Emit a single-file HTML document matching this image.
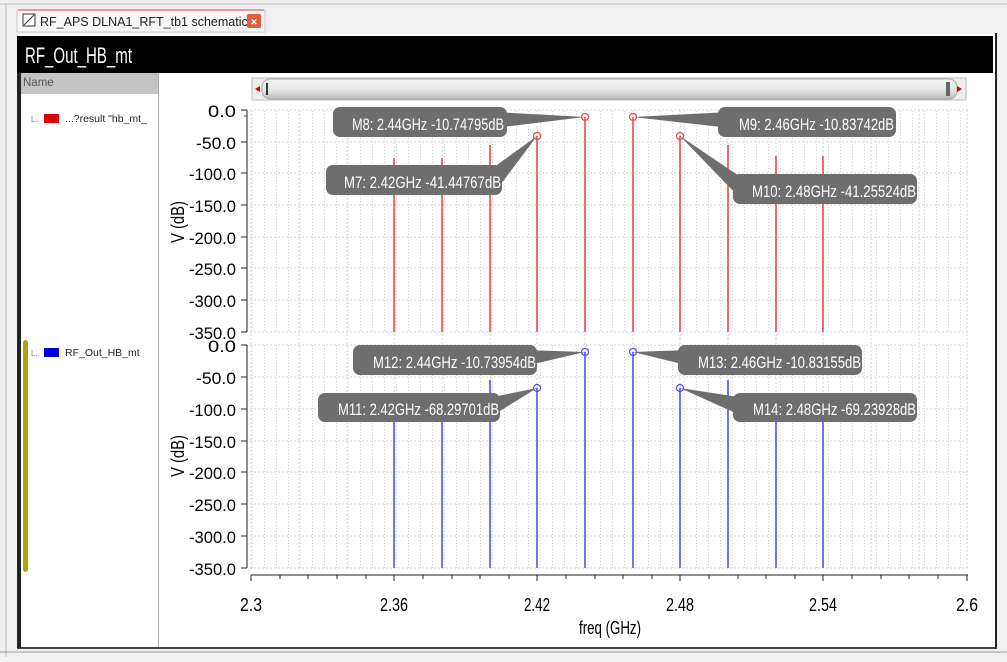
<!DOCTYPE html>
<html><head><meta charset="utf-8"><style>
html,body{margin:0;padding:0;background:#f3f3f3;}
body{width:1007px;height:657px;overflow:hidden;position:relative;font-family:"Liberation Sans",sans-serif;}
</style></head><body>
<svg width="1007" height="657" viewBox="0 0 1007 657" xmlns="http://www.w3.org/2000/svg" font-family="Liberation Sans, sans-serif">
<defs>
<linearGradient id="sb" x1="0" y1="0" x2="0" y2="1"><stop offset="0" stop-color="#f6f6f6"/><stop offset="0.5" stop-color="#e8e8e8"/><stop offset="1" stop-color="#bdbdbd"/></linearGradient>
<pattern id="vg" width="12" height="3" patternUnits="userSpaceOnUse"><rect width="1" height="1" fill="#d0d0d0"/></pattern>
</defs>
<rect x="0" y="0" width="1007" height="657" fill="#f1f1f1"/>
<line x1="0" y1="4" x2="1007" y2="4" stroke="#bbb"/>
<line x1="6" y1="4" x2="6" y2="657" stroke="#bbb"/>
<!-- tab -->
<rect x="17" y="10" width="248" height="22" fill="#f7f7f7" stroke="#c8c8c8"/>
<line x1="18" y1="10" x2="264" y2="10" stroke="#e08080" stroke-width="1.5"/>
<rect x="23" y="14" width="12" height="12" fill="#fff" stroke="#333"/>
<line x1="24" y1="25" x2="34" y2="15" stroke="#333"/>
<text x="40" y="26" font-size="12.5" fill="#222">RF_APS DLNA1_RFT_tb1 schematic</text>
<rect x="247" y="14" width="14" height="14" rx="2" fill="#e0603c"/>
<text x="254" y="25.5" font-size="11" fill="#fff" text-anchor="middle" font-weight="bold">×</text>
<!-- frame -->
<rect x="17" y="34" width="980" height="614" fill="#fff"/>
<line x1="996" y1="33" x2="996" y2="649" stroke="#222" stroke-width="2"/>
<line x1="17" y1="648" x2="997" y2="648" stroke="#444" stroke-width="2"/>
<line x1="0" y1="652" x2="1007" y2="652" stroke="#999"/>
<rect x="17" y="36" width="976" height="37" fill="#000"/>
<text x="25" y="63" font-size="22" fill="#fff" textLength="107" lengthAdjust="spacingAndGlyphs">RF_Out_HB_mt</text>
<!-- left panel -->
<rect x="17" y="73" width="4" height="575" fill="#222"/>
<rect x="21" y="73" width="137" height="21" fill="#c4c4c4"/>
<text x="23" y="86" font-size="11.5" fill="#555">Name</text>
<line x1="158.5" y1="73" x2="158.5" y2="647" stroke="#aaa"/>
<rect x="23" y="340" width="5" height="232" rx="2.5" fill="#a8a800"/>
<text x="31" y="122" font-size="8" fill="#888">L..</text>
<rect x="44" y="114" width="15" height="9" fill="#e00000"/>
<text x="65" y="122" font-size="10.5" fill="#222">...?result "hb_mt_</text>
<text x="31" y="356" font-size="8" fill="#888">L..</text>
<rect x="44" y="348" width="15" height="9" fill="#0000dd"/>
<text x="65" y="356" font-size="10.5" fill="#222">RF_Out_HB_mt</text>
<!-- scrollbar -->
<rect x="252" y="78" width="714" height="22" fill="#eee" stroke="#bbb"/>
<rect x="262" y="79" width="695" height="20" rx="8" fill="url(#sb)" stroke="#aaa"/>
<polygon points="255,89 260,86 260,92" fill="#d00"/>
<rect x="266" y="83" width="2" height="12" fill="#333"/>
<rect x="946" y="82" width="4" height="14" fill="#666"/>
<polygon points="962,89 957,86 957,92" fill="#d00"/>
<!-- grids -->
<g id="grids">
<rect x="250" y="110" width="718" height="222" fill="url(#vg)"/>
<rect x="250" y="345" width="718" height="223" fill="url(#vg)"/>
</g>
<g stroke="#d6d6d6" stroke-dasharray="2,2">
<line x1="250" y1="110" x2="968" y2="110"/><line x1="250" y1="142" x2="968" y2="142"/><line x1="250" y1="173" x2="968" y2="173"/><line x1="250" y1="205" x2="968" y2="205"/><line x1="250" y1="237" x2="968" y2="237"/><line x1="250" y1="268" x2="968" y2="268"/><line x1="250" y1="300" x2="968" y2="300"/><line x1="250" y1="332" x2="968" y2="332"/>
<line x1="250" y1="345" x2="968" y2="345"/><line x1="250" y1="377" x2="968" y2="377"/><line x1="250" y1="409" x2="968" y2="409"/><line x1="250" y1="441" x2="968" y2="441"/><line x1="250" y1="472" x2="968" y2="472"/><line x1="250" y1="504" x2="968" y2="504"/><line x1="250" y1="536" x2="968" y2="536"/><line x1="250" y1="568" x2="968" y2="568"/>
<line x1="251" y1="110" x2="251" y2="568"/><line x1="299" y1="110" x2="299" y2="568"/><line x1="347" y1="110" x2="347" y2="568"/><line x1="394" y1="110" x2="394" y2="568"/><line x1="442" y1="110" x2="442" y2="568"/><line x1="490" y1="110" x2="490" y2="568"/><line x1="537" y1="110" x2="537" y2="568"/><line x1="585" y1="110" x2="585" y2="568"/><line x1="633" y1="110" x2="633" y2="568"/><line x1="680" y1="110" x2="680" y2="568"/><line x1="728" y1="110" x2="728" y2="568"/><line x1="776" y1="110" x2="776" y2="568"/><line x1="823" y1="110" x2="823" y2="568"/><line x1="871" y1="110" x2="871" y2="568"/><line x1="919" y1="110" x2="919" y2="568"/><line x1="967" y1="110" x2="967" y2="568"/>
</g>
<!-- y axes -->
<g stroke="#222">
<line x1="247" y1="110" x2="247" y2="332"/><line x1="247" y1="345" x2="247" y2="568"/>
<line x1="241" y1="110" x2="247" y2="110"/><line x1="241" y1="142" x2="247" y2="142"/><line x1="241" y1="173" x2="247" y2="173"/><line x1="241" y1="205" x2="247" y2="205"/><line x1="241" y1="237" x2="247" y2="237"/><line x1="241" y1="268" x2="247" y2="268"/><line x1="241" y1="300" x2="247" y2="300"/><line x1="241" y1="332" x2="247" y2="332"/>
<line x1="241" y1="345" x2="247" y2="345"/><line x1="241" y1="377" x2="247" y2="377"/><line x1="241" y1="409" x2="247" y2="409"/><line x1="241" y1="441" x2="247" y2="441"/><line x1="241" y1="472" x2="247" y2="472"/><line x1="241" y1="504" x2="247" y2="504"/><line x1="241" y1="536" x2="247" y2="536"/><line x1="241" y1="568" x2="247" y2="568"/>
</g>
<rect x="243" y="110" width="4" height="222" fill="none" stroke="#444" stroke-width="0" />
<g stroke="#444" stroke-dasharray="1,5.3">
<line x1="244" y1="116" x2="247" y2="116" stroke-dasharray="none"/>
</g>
<g fill="#000" font-size="17" text-anchor="end">
<text x="236" y="117" textLength="28" lengthAdjust="spacingAndGlyphs">0.0</text>
<text x="236" y="149" textLength="40" lengthAdjust="spacingAndGlyphs">-50.0</text>
<text x="236" y="180" textLength="47" lengthAdjust="spacingAndGlyphs">-100.0</text>
<text x="236" y="212" textLength="47" lengthAdjust="spacingAndGlyphs">-150.0</text>
<text x="236" y="244" textLength="47" lengthAdjust="spacingAndGlyphs">-200.0</text>
<text x="236" y="275" textLength="47" lengthAdjust="spacingAndGlyphs">-250.0</text>
<text x="236" y="307" textLength="47" lengthAdjust="spacingAndGlyphs">-300.0</text>
<text x="236" y="339" textLength="47" lengthAdjust="spacingAndGlyphs">-350.0</text>
<text x="236" y="352" textLength="28" lengthAdjust="spacingAndGlyphs">0.0</text>
<text x="236" y="384" textLength="40" lengthAdjust="spacingAndGlyphs">-50.0</text>
<text x="236" y="416" textLength="47" lengthAdjust="spacingAndGlyphs">-100.0</text>
<text x="236" y="448" textLength="47" lengthAdjust="spacingAndGlyphs">-150.0</text>
<text x="236" y="479" textLength="47" lengthAdjust="spacingAndGlyphs">-200.0</text>
<text x="236" y="511" textLength="47" lengthAdjust="spacingAndGlyphs">-250.0</text>
<text x="236" y="543" textLength="47" lengthAdjust="spacingAndGlyphs">-300.0</text>
<text x="236" y="575" textLength="47" lengthAdjust="spacingAndGlyphs">-350.0</text>
</g>
<text transform="translate(184,222) rotate(-90)" font-size="18" text-anchor="middle" textLength="42" lengthAdjust="spacingAndGlyphs">V (dB)</text>
<text transform="translate(184,456) rotate(-90)" font-size="18" text-anchor="middle" textLength="42" lengthAdjust="spacingAndGlyphs">V (dB)</text>
<!-- x axis -->
<g stroke="#222">
<line x1="251" y1="575" x2="968" y2="575"/>
<line x1="251" y1="575" x2="251" y2="581"/><line x1="280" y1="575" x2="280" y2="579"/><line x1="308" y1="575" x2="308" y2="579"/><line x1="337" y1="575" x2="337" y2="579"/><line x1="366" y1="575" x2="366" y2="579"/><line x1="394" y1="575" x2="394" y2="581"/><line x1="423" y1="575" x2="423" y2="579"/><line x1="452" y1="575" x2="452" y2="579"/><line x1="480" y1="575" x2="480" y2="579"/><line x1="509" y1="575" x2="509" y2="579"/><line x1="537" y1="575" x2="537" y2="581"/><line x1="566" y1="575" x2="566" y2="579"/><line x1="595" y1="575" x2="595" y2="579"/><line x1="623" y1="575" x2="623" y2="579"/><line x1="652" y1="575" x2="652" y2="579"/><line x1="680" y1="575" x2="680" y2="581"/><line x1="709" y1="575" x2="709" y2="579"/><line x1="738" y1="575" x2="738" y2="579"/><line x1="766" y1="575" x2="766" y2="579"/><line x1="795" y1="575" x2="795" y2="579"/><line x1="823" y1="575" x2="823" y2="581"/><line x1="852" y1="575" x2="852" y2="579"/><line x1="881" y1="575" x2="881" y2="579"/><line x1="909" y1="575" x2="909" y2="579"/><line x1="938" y1="575" x2="938" y2="579"/><line x1="967" y1="575" x2="967" y2="581"/>
</g>
<g font-size="18" text-anchor="middle" fill="#000">
<text x="251" y="611" textLength="22" lengthAdjust="spacingAndGlyphs">2.3</text>
<text x="394" y="611" textLength="28" lengthAdjust="spacingAndGlyphs">2.36</text>
<text x="537" y="611" textLength="26" lengthAdjust="spacingAndGlyphs">2.42</text>
<text x="680" y="611" textLength="28" lengthAdjust="spacingAndGlyphs">2.48</text>
<text x="823" y="611" textLength="28" lengthAdjust="spacingAndGlyphs">2.54</text>
<text x="967" y="611" textLength="22" lengthAdjust="spacingAndGlyphs">2.6</text>
<text x="610" y="634" textLength="62" lengthAdjust="spacingAndGlyphs">freq (GHz)</text>
</g>
<!-- red lines -->
<g stroke="#f04848" stroke-width="1.6">
<line x1="394" y1="158" x2="394" y2="332"/><line x1="442" y1="158" x2="442" y2="332"/><line x1="490" y1="145" x2="490" y2="332"/><line x1="537" y1="136" x2="537" y2="332"/><line x1="585" y1="117" x2="585" y2="332"/><line x1="633" y1="117" x2="633" y2="332"/><line x1="680" y1="136" x2="680" y2="332"/><line x1="728" y1="145" x2="728" y2="332"/><line x1="776" y1="156" x2="776" y2="332"/><line x1="823" y1="156" x2="823" y2="332"/>
</g>
<g stroke="#5050f0" stroke-width="1.6">
<line x1="394" y1="393" x2="394" y2="568"/><line x1="442" y1="393" x2="442" y2="568"/><line x1="490" y1="380" x2="490" y2="568"/><line x1="537" y1="388" x2="537" y2="568"/><line x1="585" y1="352" x2="585" y2="568"/><line x1="633" y1="352" x2="633" y2="568"/><line x1="680" y1="388" x2="680" y2="568"/><line x1="728" y1="380" x2="728" y2="568"/><line x1="776" y1="393" x2="776" y2="568"/><line x1="823" y1="393" x2="823" y2="568"/>
</g>
<!-- markers -->
<g fill="none" stroke-width="1.2">
<circle cx="537" cy="136" r="3.5" stroke="#f04848"/><circle cx="585" cy="117" r="3.5" stroke="#f04848"/><circle cx="633" cy="117" r="3.5" stroke="#f04848"/><circle cx="680" cy="136" r="3.5" stroke="#f04848"/>
<circle cx="537" cy="388" r="3.5" stroke="#5050f0"/><circle cx="585" cy="352" r="3.5" stroke="#5050f0"/><circle cx="633" cy="352" r="3.5" stroke="#5050f0"/><circle cx="680" cy="388" r="3.5" stroke="#5050f0"/>
</g>
<!-- callouts -->
<g fill="#6e6e6e">
<rect x="333" y="107" width="174" height="30" rx="7"/><polygon points="495,112 585,117 495,128"/>
<rect x="718" y="107" width="178" height="30" rx="7"/><polygon points="730,112 633,117 730,128"/>
<rect x="326" y="165" width="176" height="30" rx="7"/><polygon points="490,170 537,136 498,188"/>
<rect x="733" y="174" width="184" height="30" rx="7"/><polygon points="745,180 680,136 738,196"/>
<rect x="353" y="345" width="184" height="30" rx="7"/><polygon points="525,350 585,352 525,366"/>
<rect x="678" y="345" width="184" height="30" rx="7"/><polygon points="690,350 633,352 690,366"/>
<rect x="318" y="393" width="182" height="29" rx="7"/><polygon points="488,398 537,388 495,414"/>
<rect x="733" y="393" width="184" height="29" rx="7"/><polygon points="745,398 680,388 740,415"/>
</g>
<g fill="#fff" font-size="17">
<text x="352" y="130" textLength="152" lengthAdjust="spacingAndGlyphs">M8: 2.44GHz -10.74795dB</text>
<text x="739" y="130" textLength="155" lengthAdjust="spacingAndGlyphs">M9: 2.46GHz -10.83742dB</text>
<text x="344" y="188" textLength="157" lengthAdjust="spacingAndGlyphs">M7: 2.42GHz -41.44767dB</text>
<text x="752" y="197" textLength="164" lengthAdjust="spacingAndGlyphs">M10: 2.48GHz -41.25524dB</text>
<text x="373" y="368" textLength="163" lengthAdjust="spacingAndGlyphs">M12: 2.44GHz -10.73954dB</text>
<text x="698" y="368" textLength="163" lengthAdjust="spacingAndGlyphs">M13: 2.46GHz -10.83155dB</text>
<text x="338" y="415" textLength="161" lengthAdjust="spacingAndGlyphs">M11: 2.42GHz -68.29701dB</text>
<text x="753" y="415" textLength="163" lengthAdjust="spacingAndGlyphs">M14: 2.48GHz -69.23928dB</text>
</g>
</svg>
</body></html>
